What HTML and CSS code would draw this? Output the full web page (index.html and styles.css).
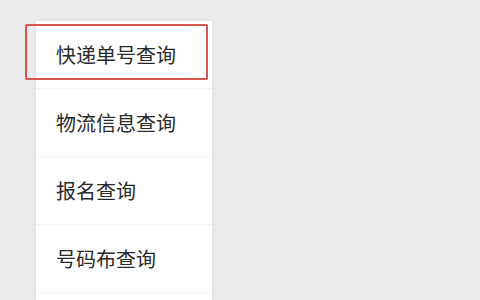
FILE: index.html
```html
<!DOCTYPE html>
<html lang="zh-CN">
<head>
<meta charset="utf-8">
<link rel="stylesheet" href="styles.css">
</head>
<body>
<div class="menu">
  <div class="item">快递单号查询</div>
  <div class="item">物流信息查询</div>
  <div class="item">报名查询</div>
  <div class="item">号码布查询</div>
  <div class="item last"></div>
  <div class="highlight"></div>
</div>
</body>
</html>
```
FILE: styles.css
```css
html, body {
  margin: 0;
  padding: 0;
  background: #ececec;
  width: 480px;
  height: 300px;
  overflow: hidden;
}
.menu {
  position: relative;
  margin: 21px 0 0 36px;
  width: 176px;
  background: #ffffff;
  box-shadow: 0 0 5px rgba(0,0,0,0.07);
  font-family: "Noto Sans CJK SC", "Noto Sans", sans-serif;
}
.item {
  height: 67px;
  border-bottom: 1px solid #f1f1f1;
  display: flex;
  align-items: center;
  padding-left: 20px;
  font-size: 20px;
  color: #2a2a2a;
}
.item.last {
  height: 7px;
  border-bottom: 0;
}
.highlight {
  position: absolute;
  left: -11px;
  top: 3px;
  width: 179px;
  height: 52px;
  border: 2px solid #d8574f;
  border-radius: 2px;
  pointer-events: none;
}
```
